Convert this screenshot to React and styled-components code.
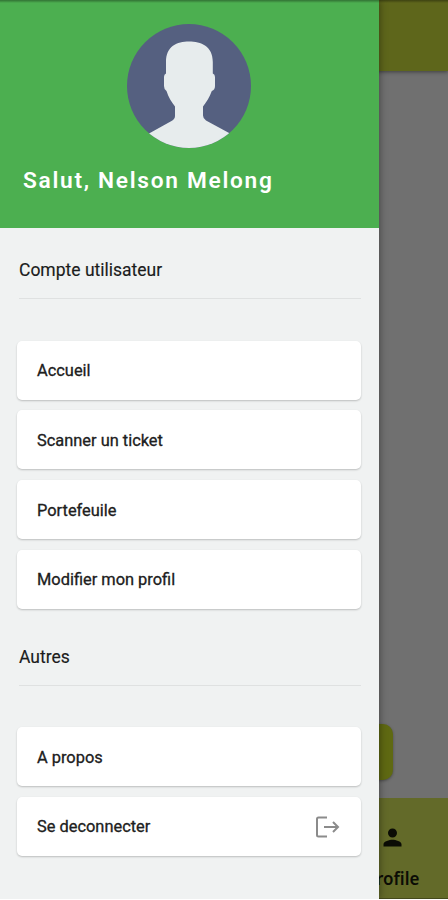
import styled, { createGlobalStyle } from "styled-components";

const accountLinks = [
  "Accueil",
  "Scanner un ticket",
  "Portefeuile",
  "Modifier mon profil",
];

const Avatar = () => (
  <AvatarSvg viewBox="0 0 124 124" role="img" aria-label="Avatar">
    <defs>
      <clipPath id="avatar-circle">
        <circle cx="62" cy="62" r="62" />
      </clipPath>
    </defs>
    <g clipPath="url(#avatar-circle)">
      <rect width="124" height="124" fill="#556080" />
      <path
        fill="#e7eced"
        d="M62 17.5C74 17.5 85.800 22 85.800 38V49.500Q88 50 88 53V62Q88 66 84.800 67C82.500 73.500 79.500 78 76 82.500V91.500Q76 94.500 79 96.500L103 109.500L124 124H0L22 109.500L44.500 97Q48 95 48 92V82.500C44.500 78 41.500 73.500 39.500 67Q37 65.500 37 62V53Q37 50 39 49.500V38C39 22 50 17.500 62 17.500Z"
      />
    </g>
  </AvatarSvg>
);

const LogoutIcon = () => (
  <LogoutSvg viewBox="0 0 26 24">
    <path d="M12 2.500H3.500Q2 2.500 2 4V20Q2 21.500 3.500 21.500H12M9 12H23M18 7L23 12L18 17" />
  </LogoutSvg>
);

const App = () => {
  return (
    <>
      <GlobalStyle />
      <Screen>
        <AppBar />
        <Body>
          <ActionButton />
        </Body>
        <BottomNav>
          <NavItem>
            <PersonSvg viewBox="0 0 24 24">
              <path d="M12 12c2.210 0 4-1.790 4-4s-1.790-4-4-4-4 1.790-4 4 1.790 4 4 4zm0 2c-2.670 0-8 1.340-8 4v2h16v-2c0-2.660-5.330-4-8-4z" />
            </PersonSvg>
            <NavLabel>Profile</NavLabel>
          </NavItem>
        </BottomNav>
        <Drawer>
          <Header>
            <Avatar />
            <Greeting>Salut, Nelson Melong</Greeting>
          </Header>
          <Section>
            <SectionTitle>Compte utilisateur</SectionTitle>
            <List>
              {accountLinks.map((label) => (
                <Item key={label}>{label}</Item>
              ))}
            </List>
          </Section>
          <Section>
            <SectionTitle>Autres</SectionTitle>
            <List>
              <Item>A propos</Item>
              <Item>
                Se deconnecter
                <LogoutIcon />
              </Item>
            </List>
          </Section>
        </Drawer>
        <TopEdge />
      </Screen>
    </>
  );
};

const GlobalStyle = createGlobalStyle`
  * {
    box-sizing: border-box;
  }

  body {
    margin: 0;
    background: #fff;
    font-family: Roboto, sans-serif;
  }
`;

const Screen = styled.div`
  position: relative;
  display: flex;
  flex-direction: column;
  width: 448px;
  height: 899px;
  background: #707070;
  overflow: hidden;
`;

const AppBar = styled.header`
  flex: 0 0 71px;
  background: #5e661b;
  box-shadow: 0 1px 4px rgba(0, 0, 0, 0.45);
`;

const Body = styled.main`
  flex: 1;
  display: flex;
  align-items: flex-end;
  justify-content: flex-end;
  padding: 0 55px 18px 0;
`;

const ActionButton = styled.div`
  width: 140px;
  height: 56px;
  border-radius: 10px;
  background: #5f6912;
  box-shadow: 0 1px 3px rgba(0, 0, 0, 0.35);
`;

const BottomNav = styled.nav`
  flex: 0 0 101px;
  display: flex;
  justify-content: flex-end;
  background: #636a29;
  border-bottom: 1px solid #454a1c;
`;

const NavItem = styled.div`
  width: 111px;
  display: flex;
  flex-direction: column;
  align-items: center;
  padding-top: 26px;
`;

const PersonSvg = styled.svg`
  width: 27px;
  height: 27px;
  fill: #0b0c05;
`;

const NavLabel = styled.span`
  margin-top: 16px;
  font-family: "Noto Sans", sans-serif;
  font-size: 17px;
  font-weight: 600;
  line-height: 24px;
  color: #0b0c05;
`;

const Drawer = styled.aside`
  position: absolute;
  top: 0;
  left: 0;
  width: 379px;
  height: 100%;
  background: #f0f2f2;
  box-shadow: 0 0 8px rgba(0, 0, 0, 0.45);
`;

const Header = styled.div`
  display: flex;
  flex-direction: column;
  align-items: center;
  height: 228px;
  padding: 24px 1px 0 0;
  background: #4caf50;
`;

const AvatarSvg = styled.svg`
  width: 124px;
  height: 124px;
`;

const Greeting = styled.h1`
  align-self: flex-start;
  margin: 19px 0 0 23px;
  font-size: 22.7px;
  font-weight: 560;
  line-height: 28px;
  letter-spacing: 1.7px;
  white-space: nowrap;
  color: #fff;
`;

const Section = styled.section`
  padding: 29px 18px 0 17px;

  & + & {
    padding-top: 34.6px;
  }
`;

const SectionTitle = styled.h2`
  height: 42px;
  margin: 0 0 0 2px;
  border-bottom: 1px solid #dfe1e1;
  font-size: 17.5px;
  font-weight: 400;
  line-height: 26px;
  color: #1b1c1c;
  -webkit-text-stroke: 0.15px #1b1c1c;
`;

const List = styled.div`
  display: flex;
  flex-direction: column;
  gap: 10.75px;
  margin-top: 41.7px;
`;

const Item = styled.div`
  display: flex;
  align-items: center;
  justify-content: space-between;
  height: 59px;
  padding: 1px 20px 0;
  border-radius: 5px;
  background: #fff;
  box-shadow: 0 1px 2px rgba(0, 0, 0, 0.22);
  font-size: 16.4px;
  font-weight: 400;
  color: #202020;
  -webkit-text-stroke: 0.3px #202020;
`;

const LogoutSvg = styled.svg`
  width: 26px;
  height: 24px;
  fill: none;
  stroke: #8b8b8b;
  stroke-width: 2;
`;

// status bar shadow that lies over the drawer and the app bar
const TopEdge = styled.div`
  position: absolute;
  top: 0;
  left: 0;
  right: 0;
  height: 3px;
  background: linear-gradient(rgba(0, 0, 0, 0.35), rgba(0, 0, 0, 0));
`;

export default App;
